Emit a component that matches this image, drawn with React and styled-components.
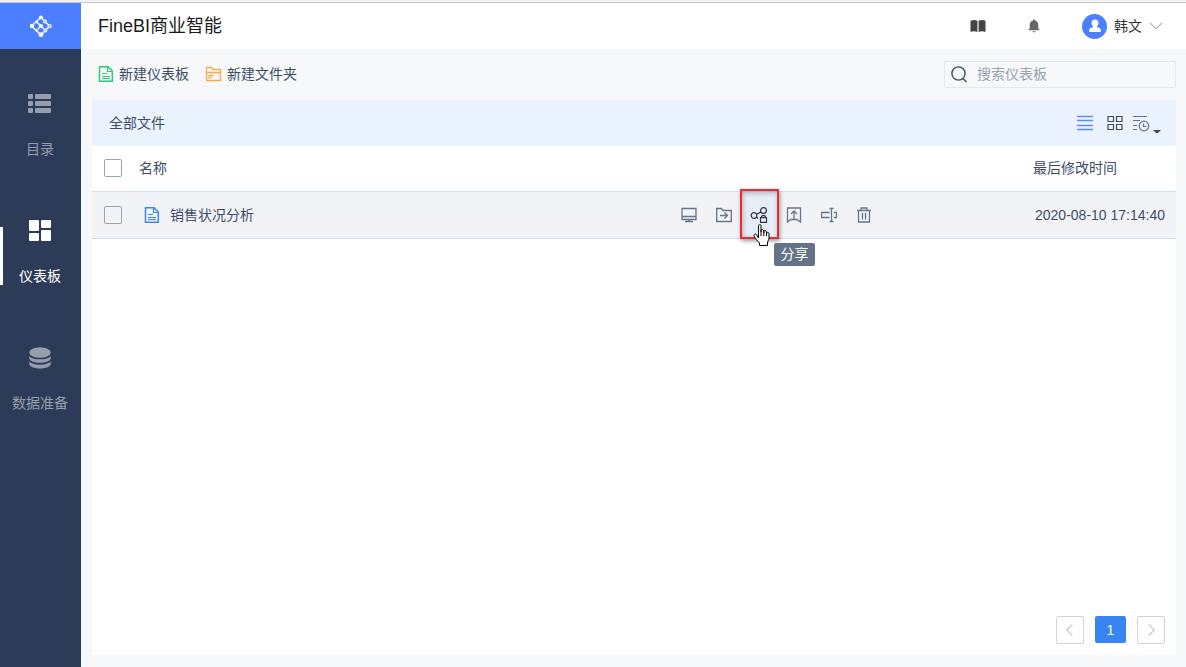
import React, { useState } from 'react'
import styled, { createGlobalStyle } from 'styled-components'


const palette = {
    primary: '#4b7fff',
    link: '#3685f2',
    side: '#2c3c58',
    sideText: '#969dab',
    text: '#3d4d66',
    icon: '#66758a',
    line: '#d0def4',
    page: '#f6f8fa',
}


export default function App() {

    const [active, setActive] = useState('dashboard');
    const [search, setSearch] = useState('');

    return (
        <>
            <GlobalStyle />
            <WindowEdge />
            <Layout>

                {/* MENU LATERAL */}
                <MenuSide>
                    <LogoLink href="#home" aria-label="FineBI"><Logo /></LogoLink>
                    <Menu>
                        {menuItems.map(({ id, label, Icon }) => (
                            <MenuItem key={id} $active={active === id} onClick={() => setActive(id)}>
                                <Icon />
                                {label}
                            </MenuItem>
                        ))}
                    </Menu>
                </MenuSide>

                <Main>
                    <TopBar>
                        <Title>FineBI商业智能</Title>
                        <TopActions>
                            <IconButton aria-label="帮助"><BookIcon /></IconButton>
                            <IconButton aria-label="消息"><BellIcon /></IconButton>
                            <UserButton>
                                <Avatar><PersonIcon /></Avatar>
                                韩文
                                <ChevronDown />
                            </UserButton>
                        </TopActions>
                    </TopBar>

                    <Toolbar>
                        <ToolButton><FileIcon color="#2fc87a" />新建仪表板</ToolButton>
                        <ToolButton><FolderIcon />新建文件夹</ToolButton>
                        <SearchBox>
                            <SearchIcon />
                            <SearchInput
                                aria-label="搜索仪表板"
                                placeholder="搜索仪表板"
                                value={search}
                                onChange={e => setSearch(e.target.value)}
                            />
                        </SearchBox>
                    </Toolbar>

                    <Panel>
                        <PanelHead>
                            <Crumb href="#all">全部文件</Crumb>
                            <ViewActions>
                                <IconButton aria-label="列表"><ListIcon /></IconButton>
                                <IconButton aria-label="网格"><GridIcon /></IconButton>
                                <IconButton aria-label="排序"><SortIcon /></IconButton>
                            </ViewActions>
                        </PanelHead>

                        <Table>
                            <thead>
                                <tr>
                                    <CheckHead><Checkbox type="checkbox" aria-label="全选" /></CheckHead>
                                    <Head>名称</Head>
                                    <ActionsHead />
                                    <TimeHead>最后修改时间</TimeHead>
                                </tr>
                            </thead>
                            <tbody>
                                <Row>
                                    <CheckCell><Checkbox type="checkbox" aria-label="销售状况分析" /></CheckCell>
                                    <Cell>
                                        <FileLink href="#file"><FileIcon color="#3f86f5" />销售状况分析</FileLink>
                                    </Cell>
                                    <Cell>
                                        <RowActions>
                                            <RowButton aria-label="预览"><MonitorIcon /></RowButton>
                                            <RowButton aria-label="移动到"><MoveIcon /></RowButton>
                                            <ShareSlot>
                                                <RowButton $hover aria-label="分享"><ShareIcon /></RowButton>
                                                <Marker />
                                                <Pointer><HandIcon /></Pointer>
                                                <Tooltip role="tooltip">分享</Tooltip>
                                            </ShareSlot>
                                            <RowButton aria-label="申请挂出"><PublishIcon /></RowButton>
                                            <RowButton aria-label="重命名"><RenameIcon /></RowButton>
                                            <RowButton aria-label="删除"><TrashIcon /></RowButton>
                                        </RowActions>
                                    </Cell>
                                    <TimeCell>2020-08-10 17:14:40</TimeCell>
                                </Row>
                            </tbody>
                        </Table>

                        <Pager aria-label="分页">
                            <PageArrow aria-label="上一页"><ArrowIcon d="M10.5 2.5 4.5 8.5l6 6" /></PageArrow>
                            <PageNumber>1</PageNumber>
                            <PageArrow aria-label="下一页"><ArrowIcon d="m5.5 2.5 6 6-6 6" /></PageArrow>
                        </Pager>
                    </Panel>
                </Main>
            </Layout>
        </>
    )
}


/* ICONS */

const Logo = () => (
    <svg width="24" height="24" viewBox="0 0 24 24" fill="none" stroke="#fff" strokeWidth="1.3">
        <path d="M2.500 12 12 3.300l3 3M2.500 12l9.500 9 3.400-3.400M7.500 7.700 12 12M17 8.600l2.600 2.300M19.600 13.300l-2.200 2" />
        <path d="m12 12-3 3M12 12l3 3" />
        <circle cx="16" cy="7.500" r="1.300" />
        <circle cx="20.600" cy="12.100" r="1.500" />
        <circle cx="16.400" cy="16.500" r="1.300" />
        <g fill="#fff" stroke="none">
            <circle cx="3" cy="12" r="2.200" />
            <circle cx="12" cy="3.500" r="2" />
            <circle cx="7.600" cy="7.700" r="1.300" />
            <circle cx="12" cy="11.800" r="1.900" />
            <circle cx="7.800" cy="16.400" r="1.300" />
            <circle cx="12" cy="20.700" r="2.400" />
        </g>
    </svg>
)

const CatalogIcon = () => (
    <svg width="24" height="22" viewBox="1 1 24 22" fill="currentColor">
        {[2, 9, 16].map(y => (
            <g key={y}>
                <rect x="1" y={y} width="5" height="5" rx="1" />
                <rect x="8" y={y} width="16" height="5" rx="1" />
            </g>
        ))}
    </svg>
)

const DashboardIcon = () => (
    <svg width="22" height="22" viewBox="0 0 22 22" fill="currentColor">
        <rect x="0" y="0" width="10" height="11" rx="1" />
        <rect x="12" y="0" width="10" height="8" rx="1" />
        <rect x="0" y="13" width="10" height="8" rx="1" />
        <rect x="12" y="10" width="10" height="11" rx="1" />
    </svg>
)

const DatabaseIcon = () => (
    <svg width="22" height="22" viewBox="0 0 22 22" fill="currentColor">
        <ellipse cx="11" cy="5.500" rx="10.700" ry="5.300" />
        <path d="M.3 8.900c2.300 4.600 19.100 4.600 21.400 0v2.600c-.8 5.600-20.600 5.600-21.400 0z" />
        <path d="M.3 14.300c2.300 4.600 19.100 4.600 21.400 0v2.600c-.8 6-20.600 6-21.400 0z" />
    </svg>
)

const BookIcon = () => (
    <svg width="16" height="14" viewBox="0 0 16 14" fill="#444">
        <path d="M.5 1.800C2.600.6 5.400.6 7.400 1.800V13C5.400 11.900 2.600 11.900.5 13zM8.600 1.800C10.600.6 13.400.6 15.500 1.800V13C13.400 11.900 10.600 11.900 8.600 13z" />
    </svg>
)

const BellIcon = () => (
    <svg width="12" height="14" viewBox="0 0 12 14" fill="#666">
        <path d="M5.200.3h1.600v1.200C9 2 10.300 3.600 10.300 6v3.600l1.500 1.600H.2l1.500-1.600V6C1.700 3.600 3 2 5.200 1.500zM4.400 12.300h3.200c-.3 1.500-2.900 1.500-3.200 0z" />
    </svg>
)

const PersonIcon = () => (
    <svg width="14" height="14" viewBox="0 0 14 14" fill="#fff">
        <path d="M7 .5c2.200 0 3.500 1.500 3.500 3.500 0 1.500-.7 2.700-1.700 3.400v.7c2.600.5 4 1.700 4 3.200V13H1.200v-1.700c0-1.500 1.400-2.700 4-3.200v-.7C4.200 6.700 3.500 5.500 3.500 4 3.500 2 4.800.5 7 .5z" />
    </svg>
)

const ChevronDown = () => (
    <svg width="14" height="8" viewBox="0 0 14 8" fill="none" stroke="#8a8f98">
        <path d="m1 .8 6 6 6-6" />
    </svg>
)

const FileIcon = ({ color }) => (
    <svg width="16" height="16" viewBox="0 0 16 16" fill="none" stroke={color}>
        <path d="M1.500.700h8.500l4.300 4.300v10.300h-12.800z" strokeWidth="1.500" />
        <path d="M9.500.5v5h5M4 7.500h5M4 10.500h8M4 12.500h8" strokeWidth="1.200" />
    </svg>
)

const FolderIcon = () => (
    <svg width="17" height="16" viewBox="0 0 17 16" fill="none" stroke="#f9a94c" strokeWidth="1.300">
        <path d="M1.500 1.500h5l1.500 2h7.500v11h-14zM1.500 6.500h14M3.500 9.500h5M3.500 11.500h3" />
    </svg>
)

const SearchIcon = () => (
    <svg width="16" height="17" viewBox="0 0 16 17" fill="none" stroke={palette.text} strokeWidth="1.400">
        <circle cx="7.500" cy="7.500" r="6.600" />
        <path d="m12 12.500 3.500 3.500" />
    </svg>
)

const ListIcon = () => (
    <svg width="16" height="16" viewBox="0 0 16 16" stroke="#5c8cf5" strokeWidth="1.300">
        <path d="M0 1.500h16M0 5.500h16M0 10.500h16M0 14.500h16" />
    </svg>
)

const GridIcon = () => (
    <svg width="16" height="16" viewBox="0 0 16 16" fill="none" stroke={palette.text} strokeWidth="1.200">
        <path d="M1 1.500h5.500v5H1zM9.500 1.500h5.500v5H9.500zM1 9.500h5.500v5H1zM9.500 9.500h5.500v5H9.500z" />
    </svg>
)

const SortIcon = () => (
    <svg width="30" height="20" viewBox="0 -1 30 20" fill="none" stroke={palette.icon} strokeWidth="1.200">
        <path d="M1 2.500h14M1 6.500h7M1 11.500h4M1 15.500h4" />
        <circle cx="12" cy="12" r="4.800" />
        <path d="M11.500 9.500v3h3" />
        <path d="M21 16h8l-4 4z" fill={palette.text} stroke="none" />
    </svg>
)

const MonitorIcon = () => (
    <svg width="16" height="16" viewBox="0 0 16 16" fill="none" stroke="currentColor" strokeWidth="1.300">
        <path d="M1 1.500h14v11H1zM1 9.500h14M8 12.500v2M4 14.500h8" />
    </svg>
)

const MoveIcon = () => (
    <svg width="16" height="16" viewBox="0 0 16 16" fill="none" stroke="currentColor" strokeWidth="1.300">
        <path d="M.7 1.500h4.800l1.500 2h8.300v11H.7zM4 8.500h7.500M8.500 5.500l3 3-3 3" />
    </svg>
)

const ShareIcon = () => (
    <svg width="18" height="18" viewBox="0 0 18 18" fill="none" stroke="#2c3648" strokeWidth="1.200">
        <circle cx="4" cy="9.500" r="2.800" />
        <circle cx="13.500" cy="4.500" r="2.900" />
        <path d="m6.300 11 1.600 1.500M6.500 8.200l4.600-2.300M11.500 11.600c0-3 4-3 4 0M10.500 11.600h6v4.800h-6z" />
    </svg>
)

const PublishIcon = () => (
    <svg width="16" height="16" viewBox="0 0 16 16" fill="none" stroke="currentColor" strokeWidth="1.300">
        <path d="M1.500 1h13v14l-3.500-2.500H5L1.500 15zM8 4v8M5 7l3-3 3 3" />
    </svg>
)

const RenameIcon = () => (
    <svg width="16" height="16" viewBox="0 0 16 16" fill="none" stroke="currentColor" strokeWidth="1.300">
        <path d="M8.500 5.500h-8v5h8M13 5.500h2.500v5H13M10.500 2v12M8.500 1.500h4M8.500 14.500h4" />
    </svg>
)

const TrashIcon = () => (
    <svg width="16" height="16" viewBox="0 0 16 16" fill="none" stroke="currentColor" strokeWidth="1.300">
        <path d="M1 3.500h14M5 3V1h6v2M2.500 3.500v11.500h11V3.500M6.500 6v6.500M9.500 6v6.500" />
    </svg>
)

const HandIcon = () => (
    <svg width="18" height="22" viewBox="0 0 18 22" fill="#fff" stroke="#000">
        <path d="M5.500 14V2c0-2 2.500-2 2.500 0v6-1.500c0-1.200 2.800-1.200 2.800.5v2-1.500c0-1.200 2.700-1 2.700.5v2-1c0-1 2.500-1 2.500.8V14c0 2-1.500 3-1.500 5v2.500h-8V19C5 17.500 1 13 1 11.500s1.500-2 2.500-.8z" />
        <path d="M8 8v4M10.800 9v3M13.500 10v2" />
    </svg>
)

const ArrowIcon = ({ d }) => (
    <svg width="16" height="16" viewBox="0 0 16 17" fill="none" stroke="#c3c7d1" strokeWidth="1.200">
        <path d={d} />
    </svg>
)

const menuItems = [
    { id: 'catalog', label: '目录', Icon: CatalogIcon },
    { id: 'dashboard', label: '仪表板', Icon: DashboardIcon },
    { id: 'data', label: '数据准备', Icon: DatabaseIcon },
]


/* STYLES */

const GlobalStyle = createGlobalStyle`
    * {
        box-sizing: border-box;
    }
    body {
        margin: 0;
        font-family: "Liberation Sans", "Noto Sans CJK SC", sans-serif;
        font-size: 14px;
        line-height: 20px;
        color: ${palette.text};
        background-color: ${palette.page};
    }
    #root {
        display: flex;
        flex-direction: column;
        min-height: 100vh;
    }
    button, input {
        font: inherit;
        color: inherit;
    }
    button {
        border: none;
        padding: 0;
        background: none;
        cursor: pointer;
    }
    a {
        color: inherit;
        text-decoration: none;
    }
    svg {
        display: block;
        flex: none;
    }
`

const WindowEdge = styled.div`
    height: 3px;
    background-color: #f2f2f2;
    border-bottom: 1px solid #c8c8c8;
`

const Layout = styled.div`
    flex: 1;
    display: flex;
`

const MenuSide = styled.aside`
    width: 81px;
    flex: none;
    background-color: ${palette.side};
`

const LogoLink = styled.a`
    height: 46px;
    display: flex;
    align-items: center;
    justify-content: center;
    background-color: ${palette.primary};
`

const Menu = styled.nav`
    display: flex;
    flex-direction: column;
    padding-top: 17px;
`

const MenuItem = styled.button`
    position: relative;
    height: 127px;
    display: flex;
    flex-direction: column;
    align-items: center;
    justify-content: center;
    gap: 24px;
    padding: 0 1px 8px 0;
    color: ${props => props.$active ? '#fff' : palette.sideText};

    &::before {
        content: "";
        display: ${props => props.$active ? 'block' : 'none'};
        position: absolute;
        left: 0;
        top: 34px;
        width: 3px;
        height: 58px;
        background-color: #fff;
    }
`

const Main = styled.main`
    flex: 1;
    min-width: 0;
    display: flex;
    flex-direction: column;
`

const TopBar = styled.header`
    height: 46px;
    display: flex;
    align-items: center;
    justify-content: space-between;
    padding: 0 23px 0 17px;
    background-color: #fff;
`

const Title = styled.h1`
    margin: 0;
    font-size: 18px;
    line-height: 24px;
    font-weight: 400;
    color: #1a1a1a;
`

const TopActions = styled.div`
    display: flex;
    align-items: center;
    gap: 42px;
`

const IconButton = styled.button`
    display: flex;
    align-items: center;
    justify-content: center;
`

const UserButton = styled.button`
    display: flex;
    align-items: center;
    gap: 7px;
    color: #333;
`

const Avatar = styled.span`
    width: 25px;
    height: 25px;
    display: flex;
    align-items: center;
    justify-content: center;
    border-radius: 50%;
    background-color: ${palette.primary};
`

const Toolbar = styled.div`
    height: 51px;
    display: flex;
    align-items: center;
    gap: 16px;
    padding: 0 10px 1px 17px;
`

const ToolButton = styled.button`
    display: flex;
    align-items: center;
    gap: 5px;
`

const SearchBox = styled.label`
    width: 232px;
    height: 27px;
    display: flex;
    align-items: center;
    gap: 10px;
    margin-left: auto;
    padding: 0 6px;
    border: 1px solid #e6e8ec;
    border-radius: 2px;
`

const SearchInput = styled.input`
    flex: 1;
    min-width: 0;
    height: 20px;
    padding: 0;
    border: none;
    outline: none;
    background: none;

    &::placeholder {
        color: #9aa3b0;
        opacity: 1;
    }
`

const Panel = styled.section`
    flex: 1;
    display: flex;
    flex-direction: column;
    margin: 0 10px 12px 11px;
    background-color: #fff;
`

const PanelHead = styled.div`
    height: 46px;
    display: flex;
    align-items: center;
    justify-content: space-between;
    padding: 0 14px 0 17px;
    background-color: #eaf2fe;
`

const Crumb = styled.a``

const ViewActions = styled.div`
    display: flex;
    align-items: center;
    gap: 9px;

    > :first-child {
        margin-right: 5px;
    }
`

const Table = styled.table`
    width: 100%;
    table-layout: fixed;
    border-collapse: collapse;
`

const Head = styled.th`
    height: 45px;
    padding: 0;
    font-weight: 400;
    text-align: left;
    border-bottom: 1px solid ${palette.line};
`

const CheckHead = styled(Head)`
    width: 47px;
    padding-left: 12px;
`

const ActionsHead = styled.td`
    width: 362px;
    border-bottom: 1px solid ${palette.line};
`

const TimeHead = styled(Head)`
    width: 143px;
`

const Row = styled.tr`
    background-color: #f1f3f7;
`

const Cell = styled.td`
    height: 47px;
    padding: 0;
    border-bottom: 1px solid ${palette.line};
`

const CheckCell = styled(Cell)`
    padding-left: 12px;
`

const TimeCell = styled(Cell)`
    padding-right: 11px;
    text-align: right;
    white-space: nowrap;
`

const Checkbox = styled.input`
    appearance: none;
    display: block;
    width: 18px;
    height: 18px;
    margin: 0;
    border: 1px solid #9aa3b0;
    border-radius: 2px;

    &:checked {
        background-color: ${palette.link};
    }
`

const FileLink = styled.a`
    display: flex;
    align-items: center;
    gap: 10px;
    padding-left: 5px;
`

const RowActions = styled.div`
    display: flex;
    align-items: center;
`

const RowButton = styled.button`
    width: 35px;
    height: 46px;
    display: flex;
    align-items: center;
    justify-content: center;
    color: ${palette.icon};
    background-color: ${props => props.$hover ? '#e6edf7' : 'transparent'};
`

const ShareSlot = styled.div`
    position: relative;
`

const Marker = styled.span`
    position: absolute;
    inset: -3px -3px -1px -1px;
    border: 2px solid #ee2a30;
    box-shadow: 1px 2px 4px rgba(0, 0, 0, .4), inset 1px 2px 5px rgba(0, 0, 0, .25);
    pointer-events: none;
`

const Pointer = styled.span`
    position: absolute;
    left: 12px;
    top: 32px;
    pointer-events: none;
`

const Tooltip = styled.span`
    position: absolute;
    left: 33px;
    top: 51px;
    width: 41px;
    height: 23px;
    line-height: 23px;
    text-align: center;
    white-space: nowrap;
    color: #fff;
    background-color: #657389;
    border-radius: 2px;
`

const Pager = styled.nav`
    display: flex;
    justify-content: flex-end;
    gap: 11px;
    margin-top: auto;
    padding: 11px;
`

const PageArrow = styled.button`
    width: 28px;
    height: 28px;
    display: flex;
    align-items: center;
    justify-content: center;
    border: 1px solid #d0d3db;
    border-radius: 2px;
`

const PageNumber = styled.button`
    width: 31px;
    height: 27px;
    color: #fff;
    background-color: ${palette.link};
    border-radius: 2px;
`
